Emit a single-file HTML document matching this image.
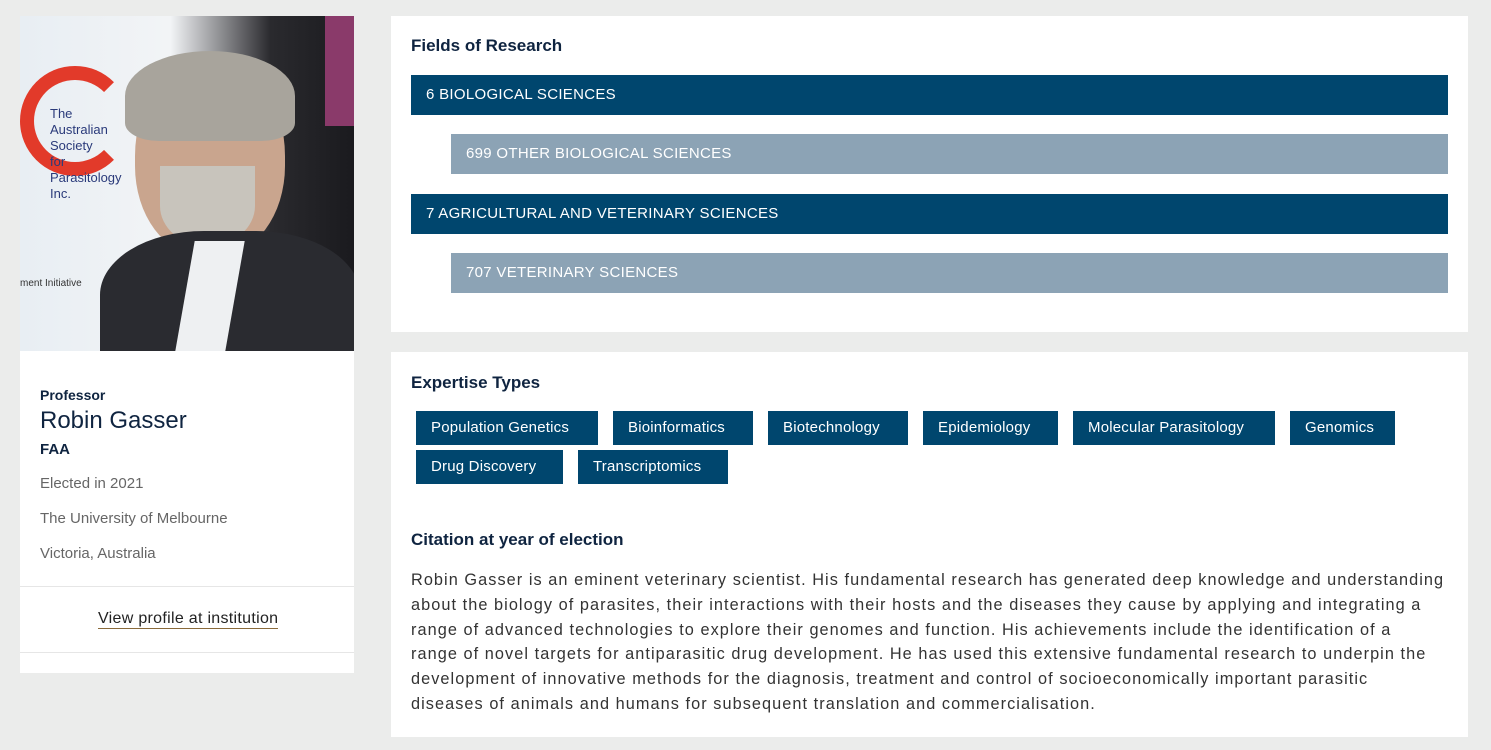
<!DOCTYPE html>
<html><head><style>
*{margin:0;padding:0;box-sizing:border-box}
body{width:1491px;height:750px;background:#ebeceb;font-family:"Liberation Sans",sans-serif;position:relative;overflow:hidden}
.abs{position:absolute}
.card{background:#fff}
.h{font-weight:bold;color:#0f2440;font-size:17px}
.bar{position:absolute;color:#fff;font-size:15px;padding-left:15px;line-height:40px;letter-spacing:.3px}
.d{background:#00466e}
.g{background:#8ca3b5}
.tag{position:absolute;background:#00466e;color:#fff;font-size:15px;height:34px;line-height:34px;padding:0 15px;letter-spacing:.2px}
</style></head><body>
<div class="abs card" style="left:20px;top:16px;width:334px;height:657px"></div>
<div class="abs" style="left:20px;top:16px;width:334px;height:335px;overflow:hidden;background:linear-gradient(90deg,#e8eef3 0%,#f2f4f6 45%,#2a2a2e 75%,#1a1a1e 100%)">
  <div class="abs" style="left:0;top:50px;width:110px;height:110px;border:14px solid #e23a2a;border-radius:50%;border-right-color:transparent"></div>
  <div class="abs" style="left:30px;top:90px;font-size:13px;color:#2a3a7a;line-height:16px">The<br>Australian<br>Society<br>for<br>Parasitology<br>Inc.</div>
  <div class="abs" style="left:0;top:262px;font-size:10px;color:#333">ment Initiative</div>
  <div class="abs" style="left:305px;top:0;width:29px;height:110px;background:#8a3a6a"></div>
  <div class="abs" style="left:115px;top:40px;width:150px;height:200px;border-radius:50% 50% 45% 45%;background:#c9a58e"></div>
  <div class="abs" style="left:105px;top:35px;width:170px;height:90px;border-radius:50% 50% 20% 20%;background:#a8a49c"></div>
  <div class="abs" style="left:140px;top:150px;width:95px;height:80px;border-radius:0 0 50% 50%;background:#c8c4bc"></div>
  <div class="abs" style="left:80px;top:215px;width:260px;height:160px;border-radius:40% 40% 0 0;background:#2a2b30"></div>
  <div class="abs" style="left:165px;top:225px;width:50px;height:110px;background:#eef0f2;transform:skew(-10deg)"></div>
</div>
<div class="abs" style="left:40px;top:387px;font-size:14px;font-weight:bold;color:#0f2440">Professor</div>
<div class="abs" style="left:40px;top:407px;font-size:24px;color:#0f2440">Robin Gasser</div>
<div class="abs" style="left:40px;top:441px;font-size:15px;font-weight:bold;color:#0f2440">FAA</div>
<div class="abs" style="left:40px;top:475px;font-size:15px;color:#666">Elected in 2021</div>
<div class="abs" style="left:40px;top:510px;font-size:15px;color:#666">The University of Melbourne</div>
<div class="abs" style="left:40px;top:545px;font-size:15px;color:#666">Victoria, Australia</div>
<div class="abs" style="left:20px;top:586px;width:334px;border-top:1px solid #e6e6e6"></div>
<div class="abs" style="left:98px;top:610px;font-size:16px;color:#222;border-bottom:1px solid #8a6a3a;line-height:18px;letter-spacing:.3px">View profile at institution</div>
<div class="abs" style="left:20px;top:652px;width:334px;border-top:1px solid #e6e6e6"></div>

<div class="abs card" style="left:391px;top:16px;width:1077px;height:316px"></div>
<div class="abs h" style="left:411px;top:36px">Fields of Research</div>
<div class="bar d" style="left:411px;top:75px;width:1037px">6 BIOLOGICAL SCIENCES</div>
<div class="bar g" style="left:451px;top:134px;width:997px">699 OTHER BIOLOGICAL SCIENCES</div>
<div class="bar d" style="left:411px;top:194px;width:1037px">7 AGRICULTURAL AND VETERINARY SCIENCES</div>
<div class="bar g" style="left:451px;top:253px;width:997px">707 VETERINARY SCIENCES</div>

<div class="abs card" style="left:391px;top:352px;width:1077px;height:385px"></div>
<div class="abs h" style="left:411px;top:373px">Expertise Types</div>
<div class="tag" style="left:416px;top:411px;width:182px">Population Genetics</div>
<div class="tag" style="left:613px;top:411px;width:140px">Bioinformatics</div>
<div class="tag" style="left:768px;top:411px;width:140px">Biotechnology</div>
<div class="tag" style="left:923px;top:411px;width:135px">Epidemiology</div>
<div class="tag" style="left:1073px;top:411px;width:202px">Molecular Parasitology</div>
<div class="tag" style="left:1290px;top:411px;width:105px">Genomics</div>
<div class="tag" style="left:416px;top:450px;width:147px">Drug Discovery</div>
<div class="tag" style="left:578px;top:450px;width:150px">Transcriptomics</div>
<div class="abs h" style="left:411px;top:530px">Citation at year of election</div>
<div class="abs" style="left:411px;top:568px;width:1050px;font-size:16.3px;letter-spacing:1.06px;line-height:24.8px;color:#333;white-space:nowrap">Robin Gasser is an eminent veterinary scientist. His fundamental research has generated deep knowledge and understanding<br>about the biology of parasites, their interactions with their hosts and the diseases they cause by applying and integrating a<br>range of advanced technologies to explore their genomes and function. His achievements include the identification of a<br>range of novel targets for antiparasitic drug development. He has used this extensive fundamental research to underpin the<br>development of innovative methods for the diagnosis, treatment and control of socioeconomically important parasitic<br>diseases of animals and humans for subsequent translation and commercialisation.</div>
</body></html>
